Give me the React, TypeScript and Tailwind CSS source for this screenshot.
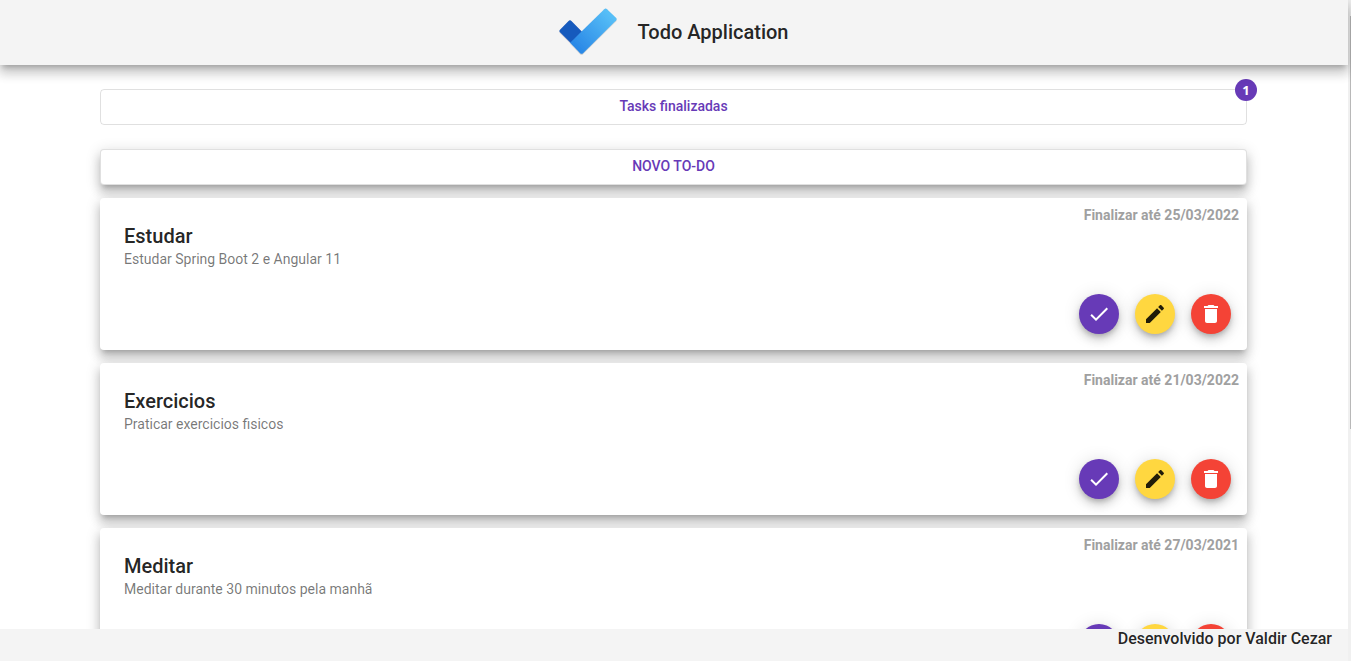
type Task = { title: string; description: string; due: string };

const tasks: Task[] = [
  { title: "Estudar", description: "Estudar Spring Boot 2 e Angular 11", due: "25/03/2022" },
  { title: "Exercicios", description: "Praticar exercicios fisicos", due: "21/03/2022" },
  { title: "Meditar", description: "Meditar durante 30 minutos pela manhã", due: "27/03/2021" },
];

function Logo() {
  return (
    <svg viewBox="0 0 60 48" className="h-12 w-[60px]" aria-hidden="true">
      <defs>
        <linearGradient id="tick" x1="20" y1="42" x2="54" y2="8" gradientUnits="userSpaceOnUse">
          <stop offset="0" stopColor="#2987e6" />
          <stop offset="1" stopColor="#57bff7" />
        </linearGradient>
        <filter id="soft" x="-10%" y="-10%" width="120%" height="120%">
          <feDropShadow dx="0" dy="0.6" stdDeviation="0.6" floodOpacity="0.3" />
        </filter>
      </defs>
      <g filter="url(#soft)">
        <path d="M1.8 21.9 10.6 13Q12 11.7 13.4 13L24 23.7 12.8 35 1.8 23.9Q0.8 22.9 1.8 21.9Z" fill="#185abd" />
        <path d="M46.3 1.2Q47.7 0 49 1.2L58.2 10.1Q59.2 11.2 58.2 12.2L25 45.2Q23.6 46.5 22.2 45.2L12.2 34.8 23.8 23.2Z" fill="url(#tick)" />
      </g>
    </svg>
  );
}

const icons = {
  check: "M9 16.17 4.83 12l-1.42 1.41L9 19 21 7l-1.41-1.41z",
  edit: "M3 17.25V21h3.75L17.81 9.94l-3.75-3.75L3 17.25zM20.71 7.04c.39-.39.39-1.02 0-1.41l-2.34-2.34c-.39-.39-1.02-.39-1.41 0l-1.83 1.83 3.75 3.75 1.83-1.83z",
  remove: "M6 19c0 1.1.9 2 2 2h8c1.1 0 2-.9 2-2V7H6v12zM19 4h-3.5l-1-1h-5l-1 1H5v2h14V4z",
};

function RoundButton({ icon, label, color }: { icon: keyof typeof icons; label: string; color: string }) {
  return (
    <button
      type="button"
      aria-label={label}
      className={`flex size-10 items-center justify-center rounded-full shadow-[0_3px_5px_-1px_rgba(0,0,0,0.2),0_6px_10px_0_rgba(0,0,0,0.14),0_1px_18px_0_rgba(0,0,0,0.12)] ${color}`}
    >
      <svg viewBox="0 0 24 24" className="size-6" fill="currentColor" aria-hidden="true">
        <path d={icons[icon]} />
      </svg>
    </button>
  );
}

function TaskCard({ task }: { task: Task }) {
  return (
    <article className="flex h-[152px] shrink-0 justify-between rounded bg-white shadow-[0_5px_5px_-3px_rgba(0,0,0,0.2),0_8px_10px_1px_rgba(0,0,0,0.14),0_3px_14px_2px_rgba(0,0,0,0.12)]">
      <div className="pt-6 pl-6">
        <h2 className="text-xl leading-7 font-medium">{task.title}</h2>
        <p className="text-sm leading-[18px] text-black/54">{task.description}</p>
      </div>
      <div className="flex flex-col items-end justify-between pt-2 pr-2 pb-4">
        <p className="text-sm leading-[18px] font-bold text-[#a0a0a0]">Finalizar até {task.due}</p>
        <div className="flex gap-4 pr-2">
          <RoundButton icon="check" label="Finalizar" color="bg-[#673ab7] text-white" />
          <RoundButton icon="edit" label="Editar" color="bg-[#ffd740] text-black/87" />
          <RoundButton icon="remove" label="Excluir" color="bg-[#f44336] text-white" />
        </div>
      </div>
    </article>
  );
}

export default function App() {
  return (
    <div className="flex h-screen overflow-hidden bg-white font-['Roboto',sans-serif] text-black/87">
      <div className="flex min-w-0 flex-1 flex-col">
        <header className="relative z-10 flex h-[65px] shrink-0 items-center justify-center gap-5 bg-[#f4f4f4] pr-0.5 pb-0.5 shadow-[0_5px_5px_-3px_rgba(0,0,0,0.2),0_8px_10px_1px_rgba(0,0,0,0.14),0_3px_14px_2px_rgba(0,0,0,0.12)]">
          <Logo />
          <h1 className="text-xl font-medium">Todo Application</h1>
        </header>
        <main className="flex min-h-0 flex-1 flex-col overflow-hidden pt-6 pr-[101px] pl-[100px]">
          <a
            href="#finalizadas"
            className="relative h-9 shrink-0 rounded border border-black/12 text-center text-sm leading-8 font-medium text-[#673ab7]"
          >
            Tasks finalizadas
            <span className="absolute -top-[11px] -right-[11px] flex size-[22px] items-center justify-center rounded-full bg-[#673ab7] font-['Noto_Sans',sans-serif] text-[13px] font-bold text-white">
              1
            </span>
          </a>
          <button
            type="button"
            className="mt-6 h-9 shrink-0 rounded border border-black/12 bg-white pb-0.5 text-sm font-medium text-[#673ab7] shadow-[0_5px_5px_-3px_rgba(0,0,0,0.2),0_8px_10px_1px_rgba(0,0,0,0.14),0_3px_14px_2px_rgba(0,0,0,0.12)]"
          >
            NOVO TO-DO
          </button>
          <section aria-label="Tarefas" className="mt-[13px] flex flex-col gap-[13px]">
            {tasks.map((task) => (
              <TaskCard key={task.title} task={task} />
            ))}
          </section>
        </main>
        <footer className="relative z-10 h-8 shrink-0 bg-[#f4f4f4] pr-4 text-right text-base leading-5 font-medium">
          Desenvolvido por Valdir Cezar
        </footer>
      </div>
      <div aria-hidden="true" className="flex w-[3px] shrink-0 justify-end bg-[#f0f0f0] pt-4">
        <div className="h-[64%] w-px bg-[#b8b8b8]" />
      </div>
    </div>
  );
}
